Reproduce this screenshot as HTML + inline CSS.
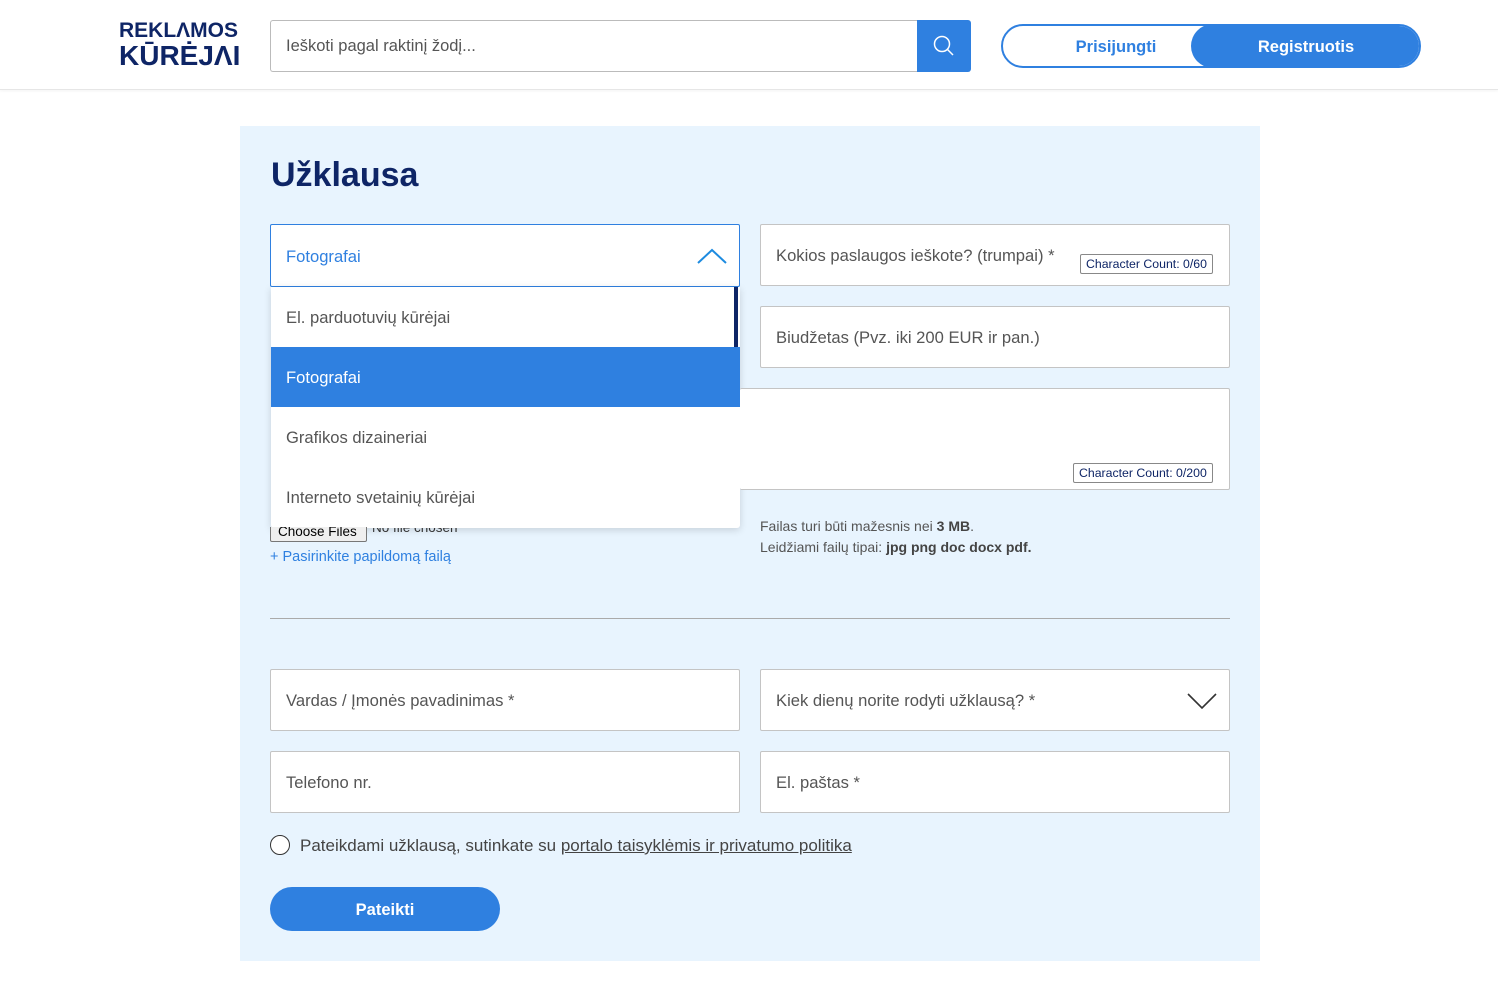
<!DOCTYPE html>
<html><head><meta charset="utf-8"><style>
*{box-sizing:border-box;margin:0;padding:0}
body{width:1498px;height:1000px;background:#fff;font-family:"Liberation Sans",sans-serif;color:#555;position:relative;overflow:hidden}
.abs{position:absolute}
header{position:absolute;left:0;top:0;width:1498px;height:90px;border-bottom:1px solid #e6e6e6;box-shadow:0 1px 3px rgba(0,0,0,.05)}
.logo{left:119px;top:20px;color:#0e2566;font-weight:bold;line-height:1}
.search{left:270px;top:20px;width:648px;height:52px;border:1px solid #bbb;border-right:none;border-radius:3px 0 0 3px;font-size:16.5px;padding:16px 15px;color:#555}
.sbtn{left:917px;top:20px;width:54px;height:52px;background:#2f80e0;border-radius:0 3px 3px 0}
.auth{left:1001px;top:24px;width:420px;height:44px;border:2px solid #2f80e0;border-radius:22px;overflow:hidden}
.auth .l{position:absolute;left:0;top:0;width:226px;height:40px;color:#2f80e0;font-weight:bold;font-size:16.5px;text-align:center;line-height:42px}
.auth .r{position:absolute;left:188px;top:-2px;width:230px;height:44px;background:#2f80e0;border-radius:22px;color:#fff;font-weight:bold;font-size:16.5px;text-align:center;line-height:46px}
.panel{left:240px;top:126px;width:1020px;height:835px;background:#e8f4fe}
h1{position:absolute;left:271px;top:156px;font-size:34px;color:#0e2566;font-weight:bold}
.f{position:absolute;background:#fff;border:1px solid #c4c4c4;border-radius:2px;font-size:16.6px;color:#555;padding-left:15px;padding-top:2px;display:flex;align-items:center}
.cc{position:absolute;border:1px solid #888;border-radius:2px;font-size:12.3px;color:#0e2566;padding:2px 5px;background:#fff}
.dd{position:absolute;left:271px;top:287px;width:469px;height:241px;background:#fff;box-shadow:0 2px 8px rgba(0,0,0,.15);border-radius:0 0 3px 3px}
.dd div{height:60px;line-height:62px;padding-left:15px;font-size:16.6px;color:#555}
.dd .sel{background:#2f80e0;color:#fff}
</style></head><body>
<header>
<div class="abs logo"><div style="font-size:21px;letter-spacing:0">REKL&Lambda;MOS</div><div style="font-size:28px;letter-spacing:0;margin-top:1px">KŪRĖJ&Lambda;I</div></div>
<div class="abs search">Ieškoti pagal raktinį žodį...</div>
<div class="abs sbtn"><svg width="54" height="52"><circle cx="25" cy="24" r="7.5" fill="none" stroke="#fff" stroke-width="1.5"/><line x1="30.5" y1="29.5" x2="36" y2="35" stroke="#fff" stroke-width="1.5"/></svg></div>
<div class="abs auth"><div class="l">Prisijungti</div><div class="r">Registruotis</div></div>
</header>
<div class="abs panel"></div>
<h1>Užklausa</h1>
<div class="f" style="left:270px;top:224px;width:470px;height:63px;border-color:#2f80e0;color:#2f80e0">Fotografai
<svg class="abs" style="left:425px;top:22px" width="32" height="18"><polyline points="2,16 16,3 30,16" fill="none" stroke="#1d8be0" stroke-width="2"/></svg></div>
<div class="dd"><div>El. parduotuvių kūrėjai</div><div class="sel">Fotografai</div><div>Grafikos dizaineriai</div><div>Interneto svetainių kūrėjai</div></div>
<div class="abs" style="left:734px;top:287px;width:4px;height:60px;background:#0e2566"></div>
<div class="f" style="left:760px;top:224px;width:470px;height:62px">Kokios paslaugos ieškote? (trumpai) *</div>
<div class="cc" style="left:1080px;top:254px">Character Count: 0/60</div>
<div class="f" style="left:760px;top:306px;width:470px;height:62px">Biudžetas (Pvz. iki 200 EUR ir pan.)</div>
<div class="f" style="left:740px;top:388px;width:490px;height:102px;border-left:none"></div>
<div class="cc" style="left:1073px;top:463px">Character Count: 0/200</div>
<div class="abs" style="left:270px;top:527px;width:97px;height:15px;overflow:hidden"><div style="border:1px solid #777;background:#efefef;border-radius:2px;height:22px;margin-top:-7px;font-size:13.5px;color:#000;padding:3px 7px">Choose Files</div></div>
<div class="abs" style="left:372px;top:520px;font-size:13.5px;color:#333;height:16px;overflow:hidden;clip-path:inset(8px 0 0 0)">No file chosen</div>
<div class="abs" style="left:270px;top:549px;font-size:14.5px;color:#2f80e0">+ Pasirinkite papildomą failą</div>
<div class="abs" style="left:760px;top:516px;font-size:14px;color:#555;line-height:21px">Failas turi būti mažesnis nei <b style="color:#444">3 MB</b>.<br>Leidžiami failų tipai: <b style="color:#444">jpg png doc docx pdf.</b></div>
<div class="abs" style="left:270px;top:618px;width:960px;height:1px;background:#aaa"></div>
<div class="f" style="left:270px;top:669px;width:470px;height:62px">Vardas / Įmonės pavadinimas *</div>
<div class="f" style="left:760px;top:669px;width:470px;height:62px">Kiek dienų norite rodyti užklausą? *
<svg class="abs" style="left:425px;top:22px" width="32" height="18"><polyline points="2,2 16,16 30,2" fill="none" stroke="#333" stroke-width="1.6"/></svg></div>
<div class="f" style="left:270px;top:751px;width:470px;height:62px">Telefono nr.</div>
<div class="f" style="left:760px;top:751px;width:470px;height:62px">El. paštas *</div>
<div class="abs" style="left:270px;top:835px;width:20px;height:20px;border:1.5px solid #333;border-radius:50%;background:#fff"></div>
<div class="abs" style="left:300px;top:836px;font-size:17px;color:#444">Pateikdami užklausą, sutinkate su <span style="text-decoration:underline">portalo taisyklėmis ir privatumo politika</span></div>
<div class="abs" style="left:270px;top:887px;width:230px;height:44px;background:#2f80e0;border-radius:22px;color:#fff;font-weight:bold;font-size:16.5px;text-align:center;line-height:46px">Pateikti</div>
</body></html>
